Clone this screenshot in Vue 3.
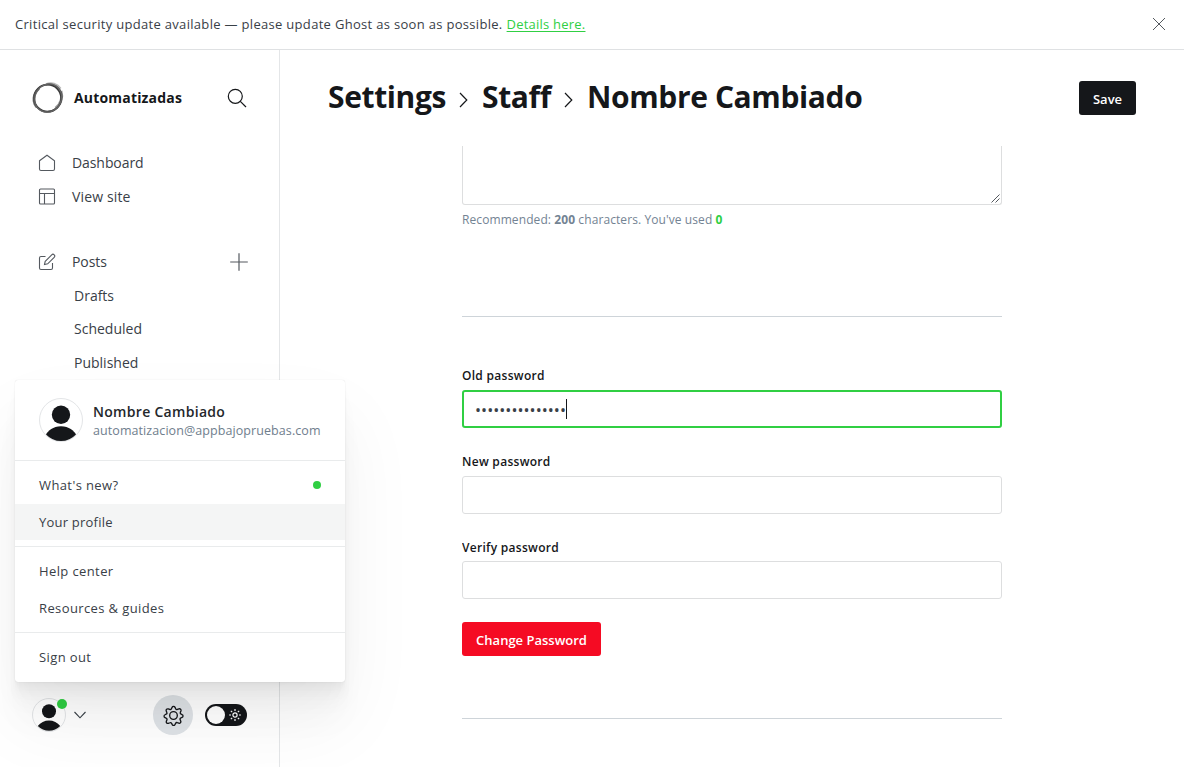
<script setup>
import { ref } from 'vue'

const crumbs = ['Settings', 'Staff', 'Nombre Cambiado']
const drafts = ['Drafts', 'Scheduled', 'Published']
const dots = ref('•'.repeat(15))
const rays = [0, 45, 90, 135, 180, 225, 270, 315]
</script>

<template>
  <div class="page">
    <header class="banner">
      <p class="alert"><span>Critical security update available — please update Ghost as soon as possible.</span><a class="alert-link">Details here.</a></p>
      <svg class="close" width="14" height="14" viewBox="0 0 14 14"><path d="M1 1l12 12M13 1L1 13" /></svg>
    </header>

    <div class="body">
      <nav class="sidebar">
        <div class="brand">
          <svg class="logo" width="32" height="32" viewBox="0 0 32 32">
            <path d="M14 2.600c5.500-2 11-.6 14.200 4.200" stroke="#b5b5b5" stroke-width="3" />
            <path d="M29 9c2 6-.2 13.500-5.500 17.200" stroke="#a0a0a0" stroke-width="2.800" />
            <path d="M7 6.500C.5 12 .5 20.500 5 25.500" stroke="#777" stroke-width="2.600" />
            <circle cx="15.600" cy="16.200" r="13.500" stroke="#3a3a3a" stroke-width="1.800" />
            <ellipse cx="16" cy="15.800" rx="14.500" ry="13.300" stroke="#555" stroke-width="1.100" transform="rotate(-35 16 15.800)" />
            <ellipse cx="16.200" cy="16" rx="13" ry="14.600" stroke="#666" stroke-width="1.100" transform="rotate(28 16 16)" />
          </svg>
          <span class="brand-name">Automatizadas</span>
          <svg class="search" width="20" height="20" viewBox="0 0 20 20"><circle cx="8.300" cy="8.300" r="7" /><path d="M13.300 13.300L19 19" /></svg>
        </div>

        <ul class="nav">
          <li class="item">
            <svg width="18" height="18" viewBox="0 0 18 18"><path d="M1.500 6.800L9 1.300l7.500 5.500v8.200a1.500 1.500 0 0 1-1.500 1.500H3A1.500 1.500 0 0 1 1.500 15z" /></svg>
            <span>Dashboard</span>
          </li>
          <li class="item">
            <svg width="18" height="18" viewBox="0 0 18 18"><rect x="1.500" y="1" width="15" height="15" rx="1" /><path d="M1.500 5.500h15M6.500 5.500v10.500" /></svg>
            <span class="wide">View site</span>
          </li>
        </ul>
        <ul class="nav posts">
          <li class="item">
            <svg width="18" height="18" viewBox="0 0 18 18"><path d="M7.500 3.500H3A1.500 1.500 0 0 0 1.500 5v10A1.500 1.500 0 0 0 3 16.500h10a1.500 1.500 0 0 0 1.500-1.500v-5" /><path d="M7.200 8.300l6.500-6.500a1.700 1.700 0 0 1 2.500 2.500L9.700 10.800l-3.200.7z" /></svg>
            <span>Posts</span>
            <svg class="plus" width="18" height="18" viewBox="0 0 18 18"><path d="M9 .2v17.600M.2 9h17.600" /></svg>
          </li>
          <li v-for="d in drafts" :key="d" class="sub">{{ d }}</li>
        </ul>

        <div class="userbar">
          <span class="avatar small">
            <svg viewBox="0 0 32 32"><circle cx="16" cy="12.300" r="7" /><path d="M4.800 27a14 14 0 0 1 22.400 0 15.500 15.500 0 0 1-22.400 0z" /></svg>
            <i class="badge"></i>
          </span>
          <svg class="chev" width="12" height="8" viewBox="0 0 12 8"><path d="M.5 1L6 6.800 11.500 1" /></svg>
          <span class="gear">
            <svg width="21" height="21" viewBox="0 0 22 22"><circle cx="11" cy="11" r="4" /><path d="M12.600 2.500l.7 1.500c.3.700 1.100 1 1.800.7l1.600-.6c1.300-.5 2.500.8 2.100 2.100l-.6 1.500c-.3.700.1 1.500.8 1.800l1 .5c1.300.6 1.300 2.400 0 3l-1.300.6c-.7.300-1 1.100-.7 1.800l.6 1.600c.5 1.300-.8 2.500-2.100 2.100l-1.500-.6c-.7-.3-1.500.1-1.800.8l-.6 1.200c-.6 1.300-2.400 1.300-3 0L9 19.300c-.3-.7-1.100-1-1.800-.7l-1.600.6c-1.300.5-2.500-.8-2.100-2.100l.6-1.500c.3-.7-.1-1.500-.8-1.800l-1.200-.6c-1.300-.6-1.300-2.400 0-3l1.200-.6c.7-.3 1-1.100.7-1.800l-.6-1.600C2.900 4.900 4.200 3.700 5.500 4.100l1.500.6c.7.300 1.500-.1 1.800-.8l.7-1.400c.6-1.300 2.500-1.300 3.100 0z" /></svg>
          </span>
          <span class="toggle">
            <i class="knob"></i>
            <svg width="12" height="12" viewBox="0 0 12 12"><circle cx="6" cy="6" r="2.100" /><path v-for="r in rays" :key="r" d="M6 .1v1.900" :transform="`rotate(${r} 6 6)`" /></svg>
          </span>
        </div>
      </nav>

      <main class="main">
        <div class="head">
          <h1 class="title">
            <template v-for="(c, i) in crumbs" :key="c">
              <svg v-if="i" class="sep" width="9" height="16" viewBox="0 0 9 16"><path d="M1 1l6.800 7L1 15" /></svg>
              <span>{{ c }}</span>
            </template>
          </h1>
          <button class="save">Save</button>
        </div>
        <div class="form">
          <div class="bio"><svg width="9" height="9" viewBox="0 0 9 9"><path d="M.5 8.500l8-8M4.500 8.500l4-4" /></svg></div>
          <p class="hint">Recommended: <b>200</b> characters. You've used <b class="count">0</b></p>
          <hr />
          <div class="field f1"><label>Old password</label><div class="input focus"><span class="dots">{{ dots }}</span><i class="caret"></i></div></div>
          <div class="field f2"><label>New password</label><div class="input"></div></div>
          <div class="field f3"><label>Verify password</label><div class="input"></div></div>
          <button class="change">Change Password</button>
          <hr class="last" />
        </div>
      </main>
    </div>

    <section class="menu">
      <div class="profile">
        <span class="avatar big">
          <svg viewBox="0 0 42 42"><circle cx="21" cy="15.700" r="9.200" /><path d="M6 35.400c2-3.600 7-8.200 15-8.200s13 4.600 15 8.200A21 21 0 0 1 21 42 21 21 0 0 1 6 35.400z" /></svg>
        </span>
        <div class="who"><strong>Nombre Cambiado</strong><span class="mail">automatizacion@appbajopruebas.com</span></div>
      </div>
      <div class="group">
        <a class="row"><span>What's new?</span><i class="dot"></i></a>
        <a class="row active">Your profile</a>
      </div>
      <div class="group">
        <a class="row">Help center</a>
        <a class="row">Resources &amp; guides</a>
      </div>
      <div class="group">
        <a class="row">Sign out</a>
      </div>
    </section>
  </div>
</template>

<style>
body { margin: 0; background: #fff; overflow: hidden; }
</style>
<style scoped>
* { box-sizing: border-box; }
.page { position: relative; width: 1184px; height: 767px; overflow: hidden; display: flex; flex-direction: column; font-family: "Open Sans", "Noto Sans", sans-serif; font-size: 14px; color: #394047; background: #fff; }
svg { fill: none; flex: none; }
span, a, label { white-space: nowrap; }
.banner { height: 50px; flex: none; border-bottom: 1px solid #dfe1e3; display: flex; align-items: center; justify-content: space-between; padding: 0 18px 0 15px; }
.alert { margin: 0 0 2px; font-size: 13px; line-height: 20px; display: flex; gap: 4px; letter-spacing: .31px; }
.alert-link { color: #30cf43; text-decoration: underline; text-underline-offset: 2px; letter-spacing: .22px; }
.close { margin-bottom: 1px; }
.close path { stroke: #54595f; }
.body { flex: 1; display: flex; min-height: 0; }
.sidebar { width: 280px; border-right: 1px solid #e4e6e8; display: flex; flex-direction: column; }
.brand { height: 32px; margin: 32px 32px 0; display: flex; align-items: center; }
.brand-name { margin: 0 0 2px 10px; font-weight: 700; font-size: 14px; color: #15171a; letter-spacing: .18px; }
.search { margin-left: auto; }
.search * { stroke: #15171a; stroke-width: 1.200; }
.nav { list-style: none; padding: 0; margin: 32px 0 0; }
.nav.posts { margin-top: 31px; }
.item { height: 34px; display: flex; align-items: center; padding: 0 31px 0 38px; }
.item svg { stroke: #54595f; stroke-width: 1.100; }
.item span { margin: 0 0 2px 16px; letter-spacing: -.08px; }
.item .wide { letter-spacing: .15px; }
.item .plus { margin-left: auto; stroke: #54595f; stroke-width: 1.200; }
.sub { height: 33.500px; display: flex; align-items: center; padding: 0 0 1px 74px; }
.userbar { margin: auto 0 31px 32px; height: 42px; display: flex; align-items: center; }
.avatar { position: relative; border-radius: 50%; border: 1px solid #e3e5e7; background: #fff; flex: none; display: block; }
.small { width: 34px; height: 34px; background: transparent; }
.avatar svg { fill: #15171a; display: block; width: 100%; height: 100%; }
.big { width: 44px; height: 44px; }
.badge { position: absolute; right: -2px; top: 0; width: 10px; height: 10px; border-radius: 50%; background: #30cf43; }
.chev { margin-left: 8px; stroke: #394047; stroke-width: 1.100; }
.gear { margin-left: 67px; width: 40px; height: 40px; border-radius: 50%; background: #dfe3e7; display: flex; align-items: center; justify-content: center; }
.gear svg { stroke: #15171a; stroke-width: 1.400; }
.toggle { margin-left: 12px; width: 42px; height: 22px; border-radius: 11px; background: #15171a; display: flex; align-items: center; justify-content: space-between; padding: 0 6px 0 2px; }
.toggle svg { stroke: #fff; stroke-width: 1.200; }
.knob { width: 18px; height: 18px; border-radius: 50%; background: #fff; }
.main { flex: 1; display: flex; flex-direction: column; min-width: 0; }
.head { height: 96px; flex: none; padding: 0 48px; display: flex; align-items: center; justify-content: space-between; }
.title { margin: 0 0 2px; font-size: 30px; line-height: 40px; font-weight: 700; color: #15171a; display: flex; align-items: center; letter-spacing: -.38px; }
.sep { margin: 6px 14px 0 13px; stroke: #15171a; stroke-width: 1.200; }
button { border: 0; font-family: inherit; font-weight: 600; font-size: 13px; color: #fff; border-radius: 3px; height: 34px; padding: 2px 0 0; display: flex; align-items: center; justify-content: center; }
.save { width: 57px; background: #15171a; }
.form { width: 540px; margin-left: 182px; flex: 1; overflow: hidden; }
.bio { height: 59px; border: 1px solid #dddedf; border-top: 0; border-radius: 0 0 3px 3px; display: flex; align-items: flex-end; justify-content: flex-end; padding: 0 1px 1px 0; }
.bio svg { stroke: #54595f; }
.hint { margin: 5px 0 0; font-size: 12px; line-height: 20px; color: #738393; letter-spacing: .09px; }
.hint b { font-weight: 700; }
.hint .count { color: #30cf43; }
hr { margin: 86px 0 0; border: 0; height: 1px; background: #ced4d9; }
.field { display: flex; flex-direction: column; }
.f1 { margin-top: 49px; }
.f2, .f3 { margin-top: 24px; }
label { font-size: 12px; font-weight: 600; line-height: 20px; color: #15171a; margin-bottom: 4px; letter-spacing: .29px; }
.f3 label { margin-bottom: 3px; }
.input { height: 38px; border: 1px solid #dddedf; border-radius: 3px; display: flex; align-items: center; padding: 0 11px; }
.input.focus { border: 2px solid #30cf43; }
.dots { font-size: 16px; letter-spacing: .05px; padding-top: 1px; }
.caret { width: 1px; height: 20px; background: #15171a; }
.change { width: 139px; background: #f50b23; margin-top: 23px; }
.last { margin-top: 62px; }
.menu { position: absolute; left: 15px; top: 380px; width: 330px; height: 302px; background: #fff; border-radius: 3px; box-shadow: 0 0 1px rgba(0,0,0,.16), 0 2.800px 2.200px rgba(0,0,0,.014), 0 6.700px 5.300px rgba(0,0,0,.018), 0 12.500px 10px rgba(0,0,0,.022), 0 22.300px 17.900px rgba(0,0,0,.022), 0 41.800px 33.400px rgba(0,0,0,.020), 0 40px 80px rgba(0,0,0,.055); }
.profile { height: 80px; display: flex; align-items: center; padding-left: 24px; }
.who { margin: 1px 0 0 10px; display: flex; flex-direction: column; }
.who strong { font-size: 14px; font-weight: 600; line-height: 20px; color: #24272b; letter-spacing: .3px; }
.mail { font-size: 12.500px; line-height: 18px; color: #6f7e8d; letter-spacing: .08px; }
.group { border-top: 1px solid #e9ebec; padding: 6px 0; display: flex; flex-direction: column; gap: 1px; }
.row { height: 36px; padding: 0 24px; display: flex; align-items: center; justify-content: space-between; font-size: 13px; letter-spacing: .39px; }
.row.active { background: #f4f5f5; letter-spacing: .22px; }
.dot { width: 8px; height: 8px; border-radius: 50%; background: #30cf43; }
</style>
